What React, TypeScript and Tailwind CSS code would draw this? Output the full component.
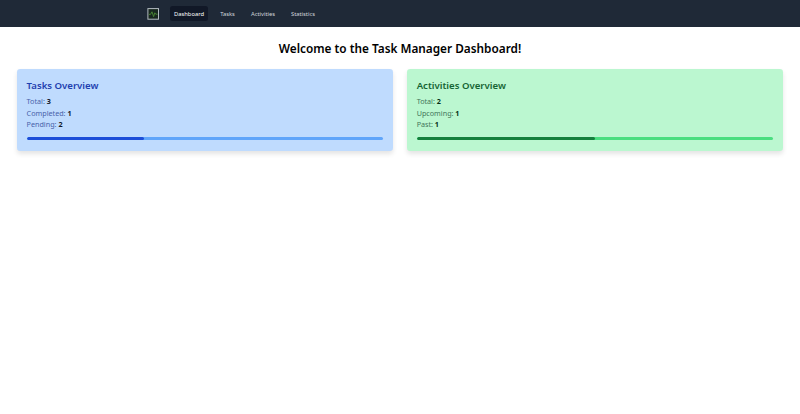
import React from "react";

const navItems = ["Dashboard", "Tasks", "Activities", "Statistics"];

const navSpacing = [
  "w-[38px] bg-[#111827] text-white",
  "ml-[7px] w-[25px] text-[#d1d5db]",
  "ml-[6px] w-[34px] text-[#d1d5db]",
  "ml-[6px] w-[34px] text-[#d1d5db]",
];

function Logo() {
  return (
    <svg width="12" height="12" viewBox="0 0 12 12" fill="none">
      <rect x="0.9" y="0.6" width="10.6" height="10.6" fill="#18271f" stroke="#b4bcc2" strokeWidth="1" />
      <path d="M2 6.4H3.5L5 3.8L6.6 8.6L7.8 4.8L8.8 6.2H10.5" stroke="#4c8b35" strokeWidth="0.9" />
    </svg>
  );
}

interface CardProps {
  title: string;
  rows: [string, number][];
  percent: number;
  card: string;
  heading: string;
  label: string;
  value: string;
  track: string;
  bar: string;
}

function OverviewCard({ title, rows, percent, card, heading, label, value, track, bar }: CardProps) {
  return (
    <section className={`h-[82px] rounded-[3.3px] px-[10px] pt-[10px] shadow-[0_3px_5px_rgba(0,0,0,0.11)] ${card}`}>
      <h2 className={`h-[14px] text-[9.6px] leading-[14px] font-semibold whitespace-nowrap ${heading}`}>{title}</h2>
      <div className="mt-[3px]">
        {rows.map(([name, count]) => (
          <p key={name} className={`h-[11.7px] text-[7.2px] leading-[11.7px] whitespace-nowrap ${label}`}>
            {name}: <span className={`font-bold ${value}`}>{count}</span>
          </p>
        ))}
      </div>
      <div className={`mt-[6px] h-[3.3px] overflow-hidden rounded-full ${track}`}>
        <div className={`h-full rounded-full ${bar}`} style={{ width: `${percent}%` }} />
      </div>
    </section>
  );
}

export default function App() {
  return (
    <div className="min-h-screen bg-white font-['Noto_Sans',sans-serif]">
      <nav className="flex h-[27px] items-center bg-[#1f2937] pl-[147px]">
        <Logo />
        <div className="ml-[11px] flex">
          {navItems.map((item, i) => (
            <a
              key={item}
              className={`flex h-[15px] items-center justify-center rounded-[2.5px] pt-px text-[5.8px] font-normal whitespace-nowrap ${navSpacing[i]}`}
            >
              {item}
            </a>
          ))}
        </div>
      </nav>
      <main className="px-[16.6px] pt-[13px]">
        <h1 className="h-[16px] text-center text-[11.8px] leading-[16px] font-semibold text-black">
          Welcome to the Task Manager Dashboard!
        </h1>
        <div className="mt-[13px] grid grid-cols-2 gap-[13.3px]">
          <OverviewCard
            title="Tasks Overview"
            rows={[["Total", 3], ["Completed", 1], ["Pending", 2]]}
            percent={33}
            card="bg-[#bfdbfe]"
            heading="text-[#1e40af]"
            label="text-[#4862aa]"
            value="text-[#111827]"
            track="bg-[#60a5fa]"
            bar="bg-[#1d4ed8]"
          />
          <OverviewCard
            title="Activities Overview"
            rows={[["Total", 2], ["Upcoming", 1], ["Past", 1]]}
            percent={50}
            card="bg-[#bbf7d0]"
            heading="text-[#166534]"
            label="text-[#42765a]"
            value="text-[#052e16]"
            track="bg-[#4ade80]"
            bar="bg-[#15803d]"
          />
        </div>
      </main>
    </div>
  );
}
